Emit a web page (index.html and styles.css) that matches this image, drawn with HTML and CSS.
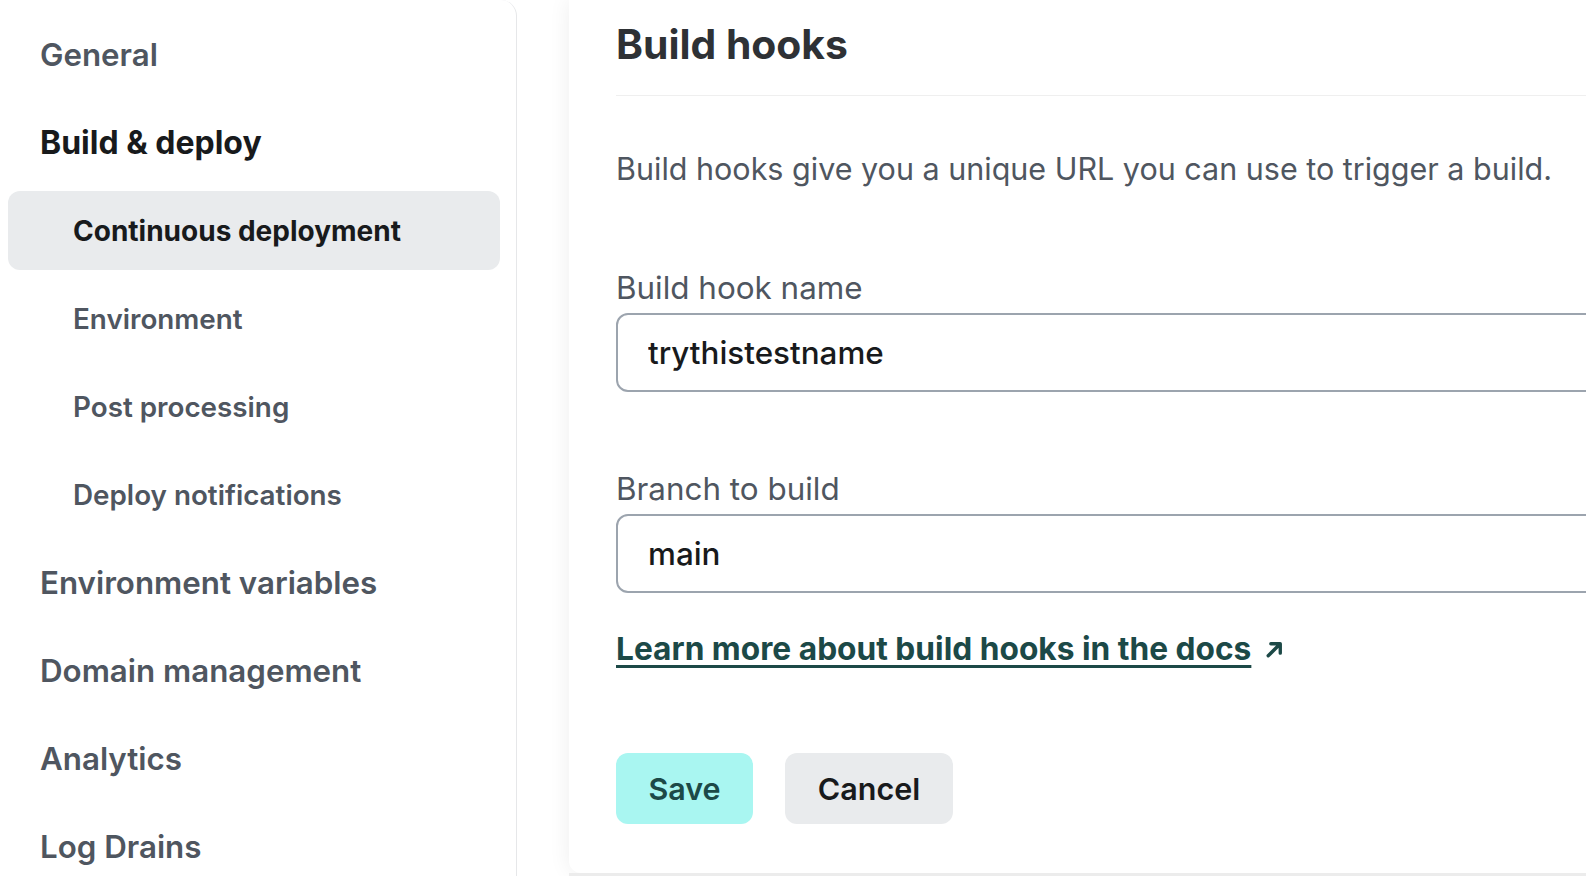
FILE: index.html
```html
<!DOCTYPE html>
<html lang="en">
<head>
<meta charset="utf-8">
<title>Build hooks</title>
<link rel="stylesheet" href="styles.css">
</head>
<body>
<div class="layout">
  <aside class="sidebar">
    <nav class="nav">
      <a class="nav-item" href="#">General</a>
      <a class="nav-item current" href="#">Build &amp; deploy</a>
      <a class="nav-item sub active" href="#">Continuous deployment</a>
      <a class="nav-item sub" href="#">Environment</a>
      <a class="nav-item sub" href="#">Post processing</a>
      <a class="nav-item sub" href="#">Deploy notifications</a>
      <a class="nav-item" href="#">Environment variables</a>
      <a class="nav-item" href="#">Domain management</a>
      <a class="nav-item" href="#">Analytics</a>
      <a class="nav-item" href="#">Log Drains</a>
    </nav>
  </aside>
  <main class="main">
    <section class="card">
      <h1 class="card-title">Build hooks</h1>
      <p class="desc">Build hooks give you a unique URL you can use to trigger a build.</p>
      <label class="field-label" for="hookname">Build hook name</label>
      <input class="field-input" id="hookname" type="text" value="trythistestname">
      <label class="field-label second" for="branch">Branch to build</label>
      <input class="field-input" id="branch" type="text" value="main">
      <a class="docs-link" href="#"><span class="docs-text">Learn more about build hooks in the docs</span><svg class="arrow" viewBox="0 0 20 20" width="21" height="21" aria-hidden="true"><path d="M4 16 L15 5 M6.5 4.5 H15.5 V13.5" fill="none" stroke="currentColor" stroke-width="3.2" stroke-linecap="round" stroke-linejoin="round"/></svg></a>
      <div class="actions">
        <button class="btn btn-primary" type="button">Save</button>
        <button class="btn btn-secondary" type="button">Cancel</button>
      </div>
    </section>
    <div class="card-foot"></div>
  </main>
</div>
</body>
</html>
```
FILE: styles.css
```css
html, body {
  margin: 0;
  padding: 0;
  height: 100%;
  overflow: hidden;
  background: #ffffff;
}

body {
  font-family: Inter, "Noto Sans", "Liberation Sans", sans-serif;
  color: #181a1c;
  -webkit-font-smoothing: antialiased;
}

.layout {
  display: flex;
  align-items: flex-start;
  height: 876px;
}

.sidebar {
  flex: 0 0 517px;
  height: 900px;
  border-right: 1px solid #e6e7e9;
  border-top-right-radius: 16px;
  background: #ffffff;
  box-sizing: border-box;
}

.nav {
  display: flex;
  flex-direction: column;
  gap: 9px;
  padding: 15px 16px 0 8px;
}

.nav-item {
  display: flex;
  align-items: center;
  height: 79px;
  padding-left: 32px;
  border-radius: 12px;
  font-size: 31.3px;
  font-weight: 600;
  color: #4f5660;
  text-decoration: none;
}

.nav-item.current {
  color: #181a1c;
  font-weight: 700;
  font-size: 32px;
}

.nav-item.sub {
  padding-left: 65px;
  font-size: 27.8px;
}

.nav-item.active {
  background: #e9ebed;
  color: #181a1c;
  font-weight: 700;
  font-size: 28px;
}

.main {
  flex: 0 0 1100px;
  margin-left: 52px;
  display: flex;
  flex-direction: column;
}

.card {
  display: flex;
  flex-direction: column;
  align-items: flex-start;
  background: #ffffff;
  padding: 0 0 49px 47px;
  border-bottom-left-radius: 12px;
  box-shadow: 0 0 22px rgba(0, 0, 0, 0.07);
}

.card-title {
  align-self: stretch;
  margin: 20px 0 0 0;
  padding-bottom: 27px;
  border-bottom: 1px solid #efefef;
  font-size: 40.8px;
  line-height: 48px;
  font-weight: 700;
  color: #2e3135;
}

.desc {
  margin: 53px 0 0 0;
  font-size: 30.5px;
  line-height: 40px;
  color: #4f5660;
}

.field-label {
  margin-top: 79px;
  font-size: 31.4px;
  line-height: 40px;
  color: #4f5660;
}

.field-label.second {
  margin-top: 77px;
}

.field-input {
  margin-top: 5px;
  width: 1000px;
  height: 79px;
  box-sizing: border-box;
  border: 2px solid #9ca4ae;
  border-radius: 12px;
  padding: 0 0 0 30px;
  font-family: Inter, "Noto Sans", "Liberation Sans", sans-serif;
  font-size: 31.4px;
  font-weight: 500;
  color: #181a1c;
  background: #ffffff;
  outline: none;
}

.docs-link {
  display: flex;
  align-items: center;
  gap: 13px;
  margin-top: 36px;
  line-height: 40px;
  font-size: 31.7px;
  font-weight: 700;
  color: #1c4947;
  text-decoration: none;
}

.docs-text {
  text-decoration: underline;
  text-decoration-thickness: 3px;
  text-underline-offset: 5px;
}

.arrow {
  display: block;
}

.actions {
  display: flex;
  gap: 32px;
  margin-top: 84px;
}

.btn {
  height: 71px;
  border: none;
  border-radius: 12px;
  font-family: Inter, "Noto Sans", "Liberation Sans", sans-serif;
  font-size: 30.5px;
  font-weight: 600;
  cursor: pointer;
}

.btn-primary {
  width: 137px;
  background: #a9f6f1;
  color: #1c4947;
}

.btn-secondary {
  width: 168px;
  background: #e9ebed;
  color: #181a1c;
}

.card-foot {
  height: 10px;
  background: #ececec;
}
```
